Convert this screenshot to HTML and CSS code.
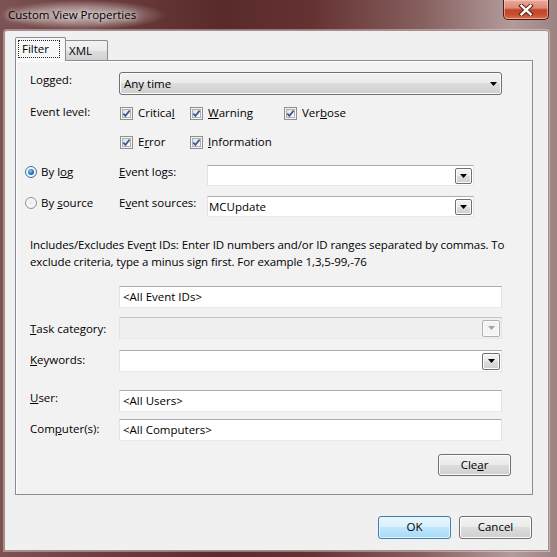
FILE: index.html
```html
<!DOCTYPE html>
<html lang="en">
<head>
<meta charset="utf-8">
<title>Custom View Properties</title>
<link rel="stylesheet" href="styles.css">
</head>
<body>
<div class="window">
  <div class="titlebar">
    <div class="title"><span>Custom View Properties</span></div>
    <div class="close">
      <svg width="16" height="12" viewBox="0 0 16 12"><path d="M3.5 1.8 L12.5 10.2 M12.5 1.8 L3.5 10.2" stroke="#5a2418" stroke-width="4.4" stroke-linecap="square" fill="none"/><path d="M3.5 1.8 L12.5 10.2 M12.5 1.8 L3.5 10.2" stroke="#ffffff" stroke-width="2.4" stroke-linecap="square" fill="none"/></svg>
    </div>
  </div>
  <div class="client">
    <div class="tabs">
      <div class="tab tab-active"><span class="focus">Filter</span></div>
      <div class="tab tab-idle">XML</div>
    </div>
    <div class="panel">
      <div class="row r-logged">
        <div class="lbl">Lo<u>g</u>ged:</div>
        <div class="dropdown"><span class="dd-text">Any time</span><svg class="tri" width="7" height="4" viewBox="0 0 7 4"><path d="M0 0H7L3.5 4Z"/></svg></div>
      </div>
      <div class="row r-lv1">
        <div class="lbl lbl-lv">Event level:</div>
        <div class="chk col1"><span class="cb"><svg width="9" height="9" viewBox="0 0 9 9"><path d="M1.3 4.6 L3.4 6.9 L7.6 1.6" fill="none" stroke="#3d5896" stroke-width="1.7"/></svg></span><span>Critica<u>l</u></span></div>
        <div class="chk col2"><span class="cb"><svg width="9" height="9" viewBox="0 0 9 9"><path d="M1.3 4.6 L3.4 6.9 L7.6 1.6" fill="none" stroke="#3d5896" stroke-width="1.7"/></svg></span><span><u>W</u>arning</span></div>
        <div class="chk"><span class="cb"><svg width="9" height="9" viewBox="0 0 9 9"><path d="M1.3 4.6 L3.4 6.9 L7.6 1.6" fill="none" stroke="#3d5896" stroke-width="1.7"/></svg></span><span>Ver<u>b</u>ose</span></div>
      </div>
      <div class="row r-lv2">
        <div class="lbl"></div>
        <div class="chk col1"><span class="cb"><svg width="9" height="9" viewBox="0 0 9 9"><path d="M1.3 4.6 L3.4 6.9 L7.6 1.6" fill="none" stroke="#3d5896" stroke-width="1.7"/></svg></span><span>E<u>r</u>ror</span></div>
        <div class="chk col2"><span class="cb"><svg width="9" height="9" viewBox="0 0 9 9"><path d="M1.3 4.6 L3.4 6.9 L7.6 1.6" fill="none" stroke="#3d5896" stroke-width="1.7"/></svg></span><span><u>I</u>nformation</span></div>
      </div>
      <div class="row r-log">
        <div class="radio-col"><span class="rb rb-on"><span class="dot"></span></span><span>By l<u>o</u>g</span></div>
        <div class="lbl2"><u>E</u>vent logs:</div>
        <div class="combo"><span class="combo-text"></span><span class="dd-btn"><svg width="7" height="4" viewBox="0 0 7 4"><path d="M0 0H7L3.5 4Z"/></svg></span></div>
      </div>
      <div class="row r-src">
        <div class="radio-col"><span class="rb"></span><span>By <u>s</u>ource</span></div>
        <div class="lbl2">E<u>v</u>ent sources:</div>
        <div class="combo"><span class="combo-text">MCUpdate</span><span class="dd-btn"><svg width="7" height="4" viewBox="0 0 7 4"><path d="M0 0H7L3.5 4Z"/></svg></span></div>
      </div>
      <p class="para">Includes/Excludes Eve<u>n</u>t IDs: Enter ID numbers and/or ID ranges separated by commas. To<br>exclude criteria, type a minus sign first. For example 1,3,5-99,-76</p>
      <div class="row r-ids">
        <div class="lbl"></div>
        <div class="textbox">&lt;All Event IDs&gt;</div>
      </div>
      <div class="row r-task">
        <div class="lbl lbl-task"><u>T</u>ask category:</div>
        <div class="combo combo-wide combo-disabled"><span class="combo-text"></span><span class="dd-btn dd-btn-big"><svg width="7" height="4" viewBox="0 0 7 4"><path d="M0 0H7L3.5 4Z"/></svg></span></div>
      </div>
      <div class="row r-kw">
        <div class="lbl lbl-kw"><u>K</u>eywords:</div>
        <div class="combo combo-wide"><span class="combo-text"></span><span class="dd-btn dd-btn-big"><svg width="7" height="4" viewBox="0 0 7 4"><path d="M0 0H7L3.5 4Z"/></svg></span></div>
      </div>
      <div class="row r-user">
        <div class="lbl"><u>U</u>ser:</div>
        <div class="textbox">&lt;All Users&gt;</div>
      </div>
      <div class="row r-comp">
        <div class="lbl lbl-comp">Com<u>p</u>uter(s):</div>
        <div class="textbox">&lt;All Computers&gt;</div>
      </div>
      <div class="row r-clear">
        <div class="btn btn-clear">Cle<u>a</u>r</div>
      </div>
    </div>
    <div class="actions">
      <div class="btn btn-default">OK</div>
      <div class="btn">Cancel</div>
    </div>
  </div>
</div>
</body>
</html>
```
FILE: styles.css
```css
* { box-sizing: border-box; }
html, body { margin: 0; padding: 0; }
body {
  width: 557px;
  height: 557px;
  overflow: hidden;
  font-family: "Open Sans", "Noto Sans", sans-serif;
  font-size: 11.5px;
  color: #000;
  background: linear-gradient(90deg, #7d5252 0%, #6c3e3e 18%, #5a2a2a 40%, #653232 56%, #86605f 76%, #b39b9b 92%, #9d8282 100%);
}
u { text-decoration: underline; text-underline-offset: 1px; }

.window { display: flex; flex-direction: column; height: 557px; }

.titlebar {
  height: 30px;
  display: flex;
  justify-content: space-between;
  align-items: flex-start;
  flex: none;
}
.title {
  margin: 0;
  padding: 7px 30px 7px 8px;
  line-height: 16px;
  color: #000;
  background: radial-gradient(closest-side, rgba(255,255,255,0.55) 0%, rgba(255,255,255,0.35) 55%, rgba(255,255,255,0) 100%);
}
.title span { text-shadow: 0 0 5px rgba(255,255,255,0.9), 0 0 9px rgba(255,255,255,0.7); }
.close {
  width: 46px;
  height: 20px;
  margin-right: 8px;
  border: 1px solid #4b1c17;
  border-top: none;
  border-radius: 0 0 5px 5px;
  background: linear-gradient(180deg, #e9aa99 0%, #dc8a76 42%, #c2452b 52%, #c6502f 78%, #e0714c 100%);
  box-shadow: inset 0 0 0 1px rgba(255,210,200,0.55);
  display: flex;
  align-items: center;
  justify-content: center;
}

.client {
  flex: 1;
  margin: 0 8px 6px 4px;
  background: #f0f0f0;
  border: 1px solid #a58d8d;
  border-radius: 3px 3px 0 0;
  box-shadow: 0 0 0 1px rgba(255,255,255,0.35);
  display: flex;
  flex-direction: column;
  padding: 6px 15px 0 10px;
}

.tabs { display: flex; align-items: flex-end; height: 23px; flex: none; }
.tab {
  border: 1px solid #898c95;
  border-bottom: none;
  border-radius: 2px 2px 0 0;
  line-height: 16px;
}
.tab-active {
  width: 51px;
  height: 24px;
  margin-bottom: -1px;
  position: relative;
  z-index: 1;
  background: #f7f7f7;
  padding: 2px 0 0 2px;
}
.focus {
  display: inline-block;
  border: 1px dotted #222;
  padding: 0 10px 0 3px;
  line-height: 16px;
}
.tab-idle {
  width: 43px;
  height: 20px;
  margin-left: -1px;
  border-left: none;
  padding: 2px 0 0 4px;
  background: linear-gradient(180deg, #f3f3f3 0%, #ebebeb 50%, #dddddd 51%, #d1d1d1 100%);
}

.panel {
  width: 518px;
  height: 435px;
  flex: none;
  border: 1px solid #898c95;
  background: #f2f2f2;
  box-shadow: inset 1px 1px 0 #fff;
  padding: 0 0 0 14px;
  display: flex;
  flex-direction: column;
}

.row { display: flex; align-items: flex-start; flex: none; }
.lbl { width: 89px; line-height: 16px; flex: none; }

.r-logged { margin-top: 11px; }
.dropdown {
  width: 383px;
  height: 23px;
  border: 1px solid #707070;
  border-radius: 3px;
  background: linear-gradient(180deg, #f2f2f2 0%, #ebebeb 49%, #dddddd 50%, #cfcfcf 100%);
  box-shadow: inset 0 0 0 1px #fcfcfc;
  display: flex;
  align-items: center;
  justify-content: space-between;
  padding: 0 4px 0 4px;
}
.dd-text { line-height: 16px; }

.r-lv1 { margin-top: 10px; height: 16px; align-items: center; }
.r-lv2 { margin-top: 13px; height: 16px; align-items: center; }
.lbl-lv { margin-top: -3px; }
.chk { display: flex; align-items: center; line-height: 16px; flex: none; }
.col1 { width: 70px; margin-left: 1px; }
.col2 { width: 94px; }
.cb {
  width: 13px;
  height: 13px;
  margin-right: 5px;
  border: 1px solid #8e8f8f;
  background: linear-gradient(135deg, #d8d8d8 0%, #f4f4f4 60%, #ffffff 100%);
  box-shadow: inset 0 0 0 1px #f4f4f4, inset 0 0 0 2px #aeb0b3;
  display: flex;
  align-items: center;
  justify-content: center;
}

.r-log { margin-top: 15px; }
.r-src { margin-top: 10px; }
.radio-col {
  width: 94px;
  margin-left: -5px;
  margin-top: -1px;
  line-height: 16px;
  display: flex;
  align-items: center;
  flex: none;
}
.rb {
  width: 12px;
  height: 12px;
  margin-right: 4px;
  border-radius: 50%;
  border: 1px solid #8f9295;
  background: radial-gradient(circle at 50% 45%, #e6e6e6 0%, #fafafa 55%, #dcdcdc 100%);
  display: flex;
  align-items: center;
  justify-content: center;
}
.rb-on { border-color: #3c6fa8; }
.dot {
  width: 6px;
  height: 6px;
  border-radius: 50%;
  background: radial-gradient(circle at 40% 35%, #8fd3ff 0%, #2a7ed0 45%, #0f3f83 100%);
}
.lbl2 { width: 88px; line-height: 16px; margin-top: -1px; flex: none; }

.combo {
  width: 267px;
  height: 21px;
  background: #fff;
  border: 1px solid #e2e3ea;
  border-top-color: #abadb3;
  border-bottom-color: #e3e9ef;
  display: flex;
  align-items: center;
  justify-content: space-between;
  padding: 0 1px 0 1px;
}
.combo-text { line-height: 16px; }
.dd-btn {
  width: 17px;
  height: 16px;
  border: 1px solid #707070;
  border-radius: 2px;
  background: linear-gradient(180deg, #f2f2f2 0%, #ebebeb 49%, #dddddd 50%, #cfcfcf 100%);
  box-shadow: inset 0 0 0 1px #fcfcfc;
  display: flex;
  align-items: center;
  justify-content: center;
}
.dd-btn-big { width: 18px; height: 17px; }
.combo-wide { width: 383px; height: 22px; }
.combo-disabled { background: #f0f0f0; border-top-color: #c5c5c5; }
.combo-disabled .dd-btn { border-color: #adb2b5; background: #f4f4f4; }
.combo-disabled .dd-btn path { fill: #a3a3a3; }

.para {
  margin: 19px 0 0 0;
  line-height: 17px;
  letter-spacing: -0.1px;
  white-space: nowrap;
}

.textbox {
  width: 383px;
  height: 22px;
  background: #fff;
  border: 1px solid #e2e3ea;
  border-top-color: #abadb3;
  border-bottom-color: #e3e9ef;
  padding: 0 0 0 3px;
  line-height: 19px;
}
.r-ids { margin-top: 16px; }
.r-task { margin-top: 9px; }
.lbl-task { margin-top: 4px; }
.r-kw { margin-top: 11px; }
.lbl-kw { margin-top: 2px; }
.r-user { margin-top: 18px; }
.r-comp { margin-top: 7px; }
.lbl-comp { margin-top: 2px; }

.r-clear { margin-top: 13px; justify-content: flex-end; padding-right: 21px; }

.btn {
  width: 73px;
  height: 23px;
  border: 1px solid #707070;
  border-radius: 3px;
  background: linear-gradient(180deg, #f2f2f2 0%, #ebebeb 49%, #dddddd 50%, #cfcfcf 100%);
  box-shadow: inset 0 0 0 1px #fcfcfc;
  text-align: center;
  line-height: 20px;
  flex: none;
}
.btn-clear { height: 22px; line-height: 19px; }
.btn-default {
  border-color: #3c7fb1;
  background: linear-gradient(180deg, #eaf6fd 0%, #d9f0fc 49%, #bee6fd 50%, #a7d9f5 100%);
  box-shadow: inset 0 0 0 1px #e6f4fc;
}

.actions {
  display: flex;
  justify-content: flex-end;
  gap: 8px;
  margin-top: 21px;
  padding-right: 1px;
  flex: none;
}
```
